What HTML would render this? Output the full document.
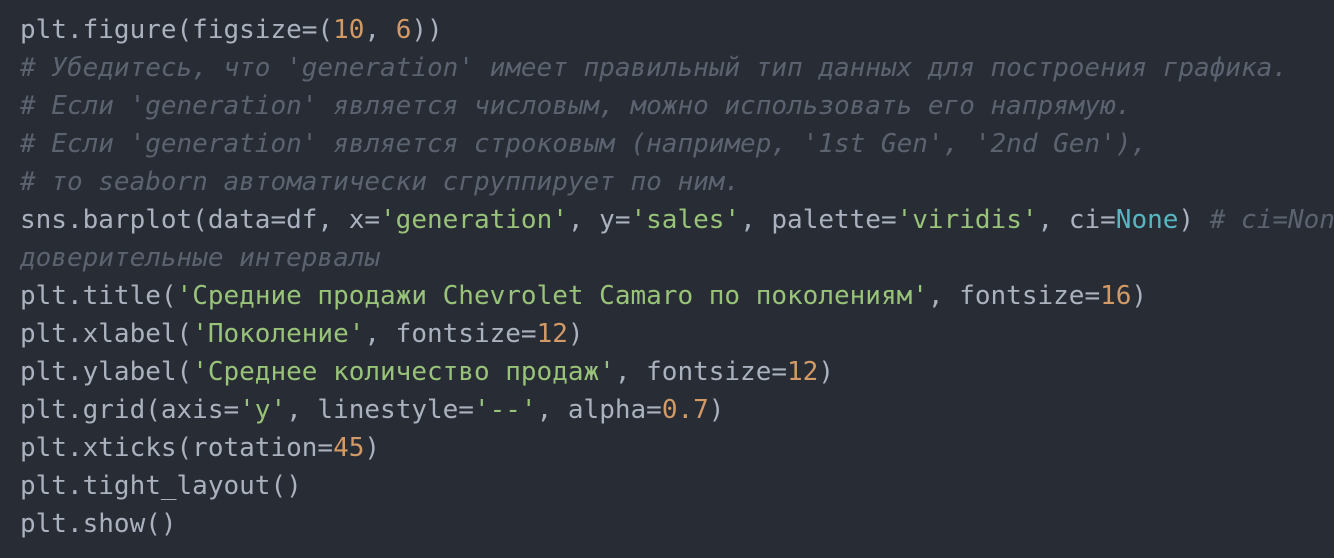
<!DOCTYPE html><html><head><meta charset="utf-8"><style>
body{margin:0;width:1334px;height:558px;background:#282c34;overflow:hidden}
pre{margin:0;padding:11px 0 0 20px;width:1314px;height:547px;overflow:hidden;font-family:"DejaVu Sans Mono","Liberation Mono",monospace;font-size:26px;line-height:38px;color:#abb2bf;white-space:pre}
.s{color:#98c379}.n{color:#d19a66}.k{color:#56b6c2}.c{color:#5c6370;font-style:italic}
</style></head><body><pre>plt.figure(figsize=(<span class="n">10</span>, <span class="n">6</span>))
<span class="c"># Убедитесь, что 'generation' имеет правильный тип данных для построения графика.</span>
<span class="c"># Если 'generation' является числовым, можно использовать его напрямую.</span>
<span class="c"># Если 'generation' является строковым (например, '1st Gen', '2nd Gen'),</span>
<span class="c"># то seaborn автоматически сгруппирует по ним.</span>
sns.barplot(data=df, x=<span class="s">'generation'</span>, y=<span class="s">'sales'</span>, palette=<span class="s">'viridis'</span>, ci=<span class="k">None</span>) <span class="c"># ci=None</span>
<span class="c">доверительные интервалы</span>
plt.title(<span class="s">'Средние продажи Chevrolet Camaro по поколениям'</span>, fontsize=<span class="n">16</span>)
plt.xlabel(<span class="s">'Поколение'</span>, fontsize=<span class="n">12</span>)
plt.ylabel(<span class="s">'Среднее количество продаж'</span>, fontsize=<span class="n">12</span>)
plt.grid(axis=<span class="s">'y'</span>, linestyle=<span class="s">'--'</span>, alpha=<span class="n">0.7</span>)
plt.xticks(rotation=<span class="n">45</span>)
plt.tight_layout()
plt.show()</pre></body></html>
